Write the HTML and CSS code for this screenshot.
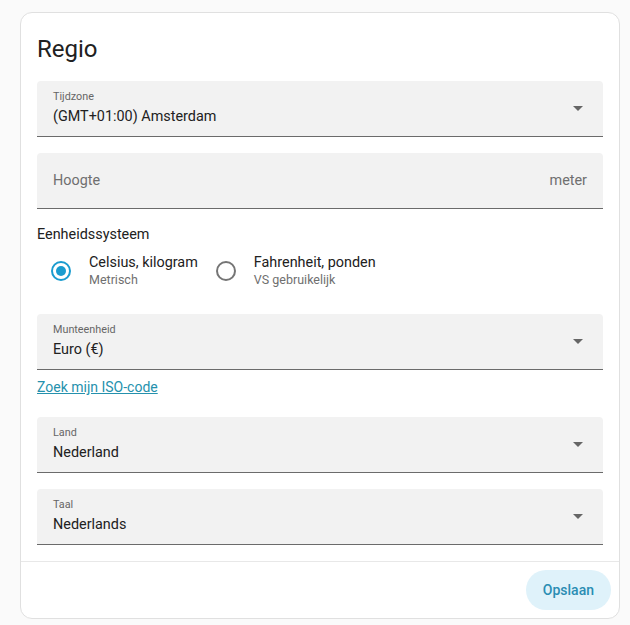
FILE: index.html
```html
<!DOCTYPE html>
<html lang="nl">
<head>
<meta charset="utf-8">
<title>Regio</title>
<link rel="stylesheet" href="styles.css">
</head>
<body>
<div class="card">
  <h1 class="card-header">Regio</h1>
  <div class="card-content">
    <div class="field select">
      <span class="label">Tijdzone</span>
      <span class="value">(GMT+01:00) Amsterdam</span>
      <svg class="arrow" width="10" height="5" viewBox="7 10 10 5"><polygon points="7 10 12 15 17 10" fill="#666"/></svg>
    </div>
    <div class="field input">
      <span class="placeholder">Hoogte</span>
      <span class="suffix">meter</span>
    </div>
    <div class="unit-section">
      <div class="unit-title">Eenheidssysteem</div>
      <div class="radios">
        <div class="radio-item">
          <span class="radio checked"><span class="ring"><span class="dot"></span></span></span>
          <span class="radio-label"><span class="main">Celsius, kilogram</span><span class="sub">Metrisch</span></span>
        </div>
        <div class="radio-item">
          <span class="radio"><span class="ring"></span></span>
          <span class="radio-label"><span class="main">Fahrenheit, ponden</span><span class="sub">VS gebruikelijk</span></span>
        </div>
      </div>
    </div>
    <div class="field select">
      <span class="label">Munteenheid</span>
      <span class="value">Euro (€)</span>
      <svg class="arrow" width="10" height="5" viewBox="7 10 10 5"><polygon points="7 10 12 15 17 10" fill="#666"/></svg>
    </div>
    <a class="iso-link" href="#">Zoek mijn ISO-code</a>
    <div class="field select">
      <span class="label">Land</span>
      <span class="value">Nederland</span>
      <svg class="arrow" width="10" height="5" viewBox="7 10 10 5"><polygon points="7 10 12 15 17 10" fill="#666"/></svg>
    </div>
    <div class="field select">
      <span class="label">Taal</span>
      <span class="value">Nederlands</span>
      <svg class="arrow" width="10" height="5" viewBox="7 10 10 5"><polygon points="7 10 12 15 17 10" fill="#666"/></svg>
    </div>
  </div>
  <div class="card-actions">
    <button class="save-btn" type="button">Opslaan</button>
  </div>
</div>
</body>
</html>
```
FILE: styles.css
```css
html, body {
  margin: 0;
  padding: 0;
}
body {
  background: #fafafa;
  font-family: Roboto, "Liberation Sans", sans-serif;
  color: #212121;
  padding: 12px 11px 6px 20px;
}
.card {
  box-sizing: border-box;
  width: 600px;
  background: #fff;
  border: 1px solid #e0e0e0;
  border-radius: 12px;
}
.card-header {
  margin: 0;
  padding: 20px 16px 16px;
  font-size: 24px;
  font-weight: 400;
  line-height: 32px;
  color: #212121;
}
.card-content {
  padding: 0 16px 16px;
  display: flex;
  flex-direction: column;
}
.field {
  position: relative;
  box-sizing: border-box;
  height: 56px;
  background: #f2f2f2;
  border-radius: 4px 4px 0 0;
  border-bottom: 1px solid #6b6b6b;
  padding: 0 16px;
  margin-bottom: 16px;
  display: flex;
}
.field.select {
  flex-direction: column;
  justify-content: flex-start;
  padding-top: 9px;
}
.field .label {
  font-size: 10.8px;
  line-height: 14px;
  color: #666;
}
.field .value {
  font-size: 14.4px;
  line-height: 22px;
  margin-top: 2px;
  color: #212121;
}
.field .arrow {
  position: absolute;
  right: 20px;
  top: 25px;
}
.field.input {
  align-items: center;
  justify-content: space-between;
}
.placeholder, .suffix {
  font-size: 14.4px;
  color: #6f6f6f;
}
.unit-section {
  margin-top: 0;
  margin-bottom: 23px;
}
.unit-title {
  font-size: 14.4px;
  line-height: 20px;
  color: #212121;
}
.radios {
  display: flex;
  gap: 8px;
  margin-top: 6px;
  padding-left: 4px;
}
.radio-item {
  display: flex;
  align-items: center;
  gap: 8px;
}
.radio {
  width: 40px;
  height: 40px;
  display: flex;
  align-items: center;
  justify-content: center;
}
.ring {
  box-sizing: border-box;
  width: 20px;
  height: 20px;
  border: 2px solid #757575;
  border-radius: 50%;
  display: flex;
  align-items: center;
  justify-content: center;
}
.radio.checked .ring {
  border-color: #1a9ccf;
}
.dot {
  width: 10px;
  height: 10px;
  border-radius: 50%;
  background: #1a9ccf;
}
.radio-label {
  display: flex;
  flex-direction: column;
  margin-top: -2px;
}
.radio-label .main {
  font-size: 14.4px;
  line-height: 19px;
  color: #212121;
}
.radio-label .sub {
  font-size: 12.5px;
  line-height: 16px;
  color: #6f6f6f;
}
.iso-link {
  align-self: flex-start;
  font-size: 14px;
  line-height: 20px;
  color: #2591ad;
  text-decoration: underline;
  margin-top: -9px;
  margin-bottom: 20px;
}
.card-content .field:last-child {
  margin-bottom: 0;
}
.card-actions {
  border-top: 1px solid #e8e8e8;
  padding: 8px;
  display: flex;
  justify-content: flex-end;
}
.save-btn {
  height: 40px;
  padding: 0 17px;
  border: none;
  border-radius: 20px;
  background: #dff2fa;
  color: #2a8db3;
  font-family: Roboto, "Liberation Sans", sans-serif;
  font-size: 14px;
  font-weight: 500;
  cursor: pointer;
}
```
